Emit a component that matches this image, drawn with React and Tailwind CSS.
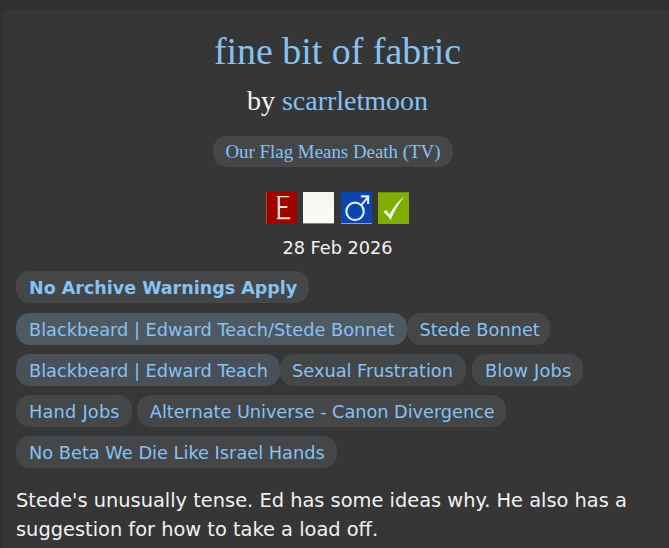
// Work header card: title, author, fandom, rating icons, tags and summary

const rowOne = ['Blackbeard | Edward Teach/Stede Bonnet', 'Stede Bonnet'];

function Tag({ children, className = '' }) {
  return (
    <a className={`inline-block h-[32px] rounded-[14px] leading-[34px] whitespace-nowrap text-[#86c2f3] ${className}`}>
      {children}
    </a>
  );
}

function Square({ className = '', children }) {
  return (
    <span className={`block w-[31px] h-[32px] overflow-hidden ${className}`}>
      {children}
    </span>
  );
}

function RatingIcons() {
  return (
    <div className="flex justify-center gap-[6.33px]">
      <Square className="bg-[#a00000] border-l border-[#b04a10]">
        <svg viewBox="0 0 31 32" className="w-full h-full">
          <path d="M10 3.500h13v1.500h-9.500v9h7.500v2h-7.500v9.500H24v2H10v-1h1V4.500h-1z" fill="#eadfd8" />
        </svg>
      </Square>
      <Square className="bg-gradient-to-b from-[#f3f3f0] to-[#fdfdf8] border-b border-[#c46a60]" />
      <Square className="bg-[#0a46ad] border-b border-[#a8a860]">
        <svg viewBox="0 0 31 32" className="w-full h-full" fill="none" stroke="#dfe8f4" strokeWidth="2.200">
          <circle cx="14" cy="20" r="9" />
          <path d="M20.500 13.500L27.500 5M20 4.500H27.500V12.500" />
        </svg>
      </Square>
      <Square className="bg-[#7fae00] border-t border-[#688f10]">
        <svg viewBox="0 0 31 32" className="w-full h-full">
          <path d="M5 19.500l3-2 3.500 4.500C15 14.500 20.500 8 27 3 21.500 10 16.500 18 12.500 28c-2-3.500-4.500-6-7.500-8.500z" fill="#f4f6ea" />
        </svg>
      </Square>
    </div>
  );
}

export default function App() {
  return (
    <div className="min-h-[548px] bg-[#2f2f2f] pt-[9px] pl-[2px] overflow-hidden font-['DejaVu_Sans',sans-serif] text-[17.75px] text-[#f2f2f2]">
      <div className="h-[539px] bg-[#363636] rounded-tl-[6px] pl-[14px] pr-[10px]">
        <div className="text-center font-['Liberation_Serif',serif]">
          <h2 className="pt-[17px] text-[37.9px] leading-[50px] text-[#86c2f3]">fine bit of fabric</h2>
          <h3 className="mt-[10px] text-[28px] leading-[30px]">
            by <a className="text-[#86c2f3]">scarrletmoon</a>
          </h3>
          <div className="mt-[20px] -ml-[9px]">
            <a className="inline-block h-[31px] px-[12px] rounded-[14px] bg-[#444648] text-[18.9px] leading-[31px] text-[#86c2f3]">
              Our Flag Means Death (TV)
            </a>
          </div>
        </div>

        <div className="mt-[25px]">
          <RatingIcons />
        </div>
        <p className="mt-[12px] text-center text-[17.7px] leading-[24px]">28 Feb 2026</p>

        <div className="mt-[11px] flex flex-col gap-[9px]">
          <div className="mb-[1px]"><Tag className="bg-[#444648] pl-[13px] pr-[12px] font-bold text-[17.5px]">No Archive Warnings Apply</Tag></div>
          <div className="flex">
            <Tag className="bg-[#4f5962] pl-[13px] pr-[13px]">{rowOne[0]}</Tag>
            <Tag className="bg-[#444648] pl-[12px] pr-[10px]">{rowOne[1]}</Tag>
          </div>
          <div className="flex">
            <Tag className="bg-[#495057] pl-[13px] pr-[12px]">Blackbeard | Edward Teach</Tag>
            <Tag className="bg-[#444648] pl-[12px] pr-[13px]">Sexual Frustration</Tag>
            <Tag className="bg-[#444648] ml-[6px] pl-[13px] pr-[11px] tracking-[0.2px]">Blow Jobs</Tag>
          </div>
          <div className="flex gap-[5px]">
            <Tag className="bg-[#444648] pl-[13px] pr-[12px] tracking-[0.2px]">Hand Jobs</Tag>
            <Tag className="bg-[#444648] pl-[13px] pr-[11px] tracking-[-0.05px]">Alternate Universe - Canon Divergence</Tag>
          </div>
          <div><Tag className="bg-[#444648] pl-[13px] pr-[12px]">No Beta We Die Like Israel Hands</Tag></div>
        </div>

        <p className="mt-[18px] text-[19.4px] leading-[29px]">
          Stede's unusually tense. Ed has some ideas why. He also has a suggestion for how to take a load off.
        </p>
      </div>
    </div>
  );
}
